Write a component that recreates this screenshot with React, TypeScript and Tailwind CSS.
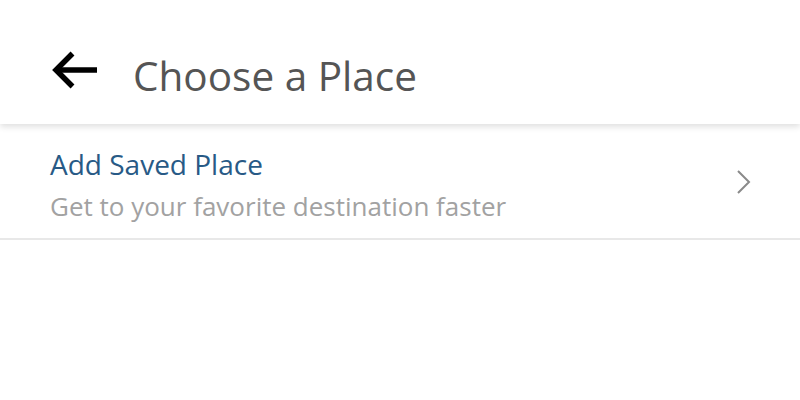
import React from "react";

export default function App() {
  return (
    <div className="w-[800px] h-[400px] bg-white overflow-hidden" style={{ fontFamily: "'Open Sans', Roboto, sans-serif" }}>
      <header className="relative z-10 h-[124px] flex items-start bg-white shadow-[0_3px_6px_rgba(0,0,0,0.12)]">
        <button className="ml-[51px] mt-[50px] w-[46px] h-[40px] flex items-center justify-center">
          <svg width="46" height="40" viewBox="0 0 46 40" fill="none">
            <path d="M46 20H7" stroke="#000" strokeWidth="5.5" />
            <path d="M21.5 3.5L5 20l16.5 16.5" stroke="#000" strokeWidth="5.5" strokeLinejoin="miter" />
          </svg>
        </button>
        <h1 className="ml-[36px] mt-[56px] text-[40.5px] text-[#555555] leading-none">Choose a Place</h1>
      </header>
      <div className="flex items-center h-[116px] border-b-2 border-[#e8e8e8] pl-[50px] pr-[48px]">
        <div className="flex-1 flex flex-col gap-[12px] pt-[8px]">
          <span className="text-[28px] leading-[30px] text-[#285a86]">Add Saved Place</span>
          <span className="text-[26px] leading-[30px] text-[#a2a2a2]">Get to your favorite destination faster</span>
        </div>
        <svg width="16" height="26" viewBox="0 0 16 26" fill="none" className="mt-[2px]">
          <path d="M2 2l11 11L2 24" stroke="#8a8a8a" strokeWidth="2" />
        </svg>
      </div>
    </div>
  );
}
